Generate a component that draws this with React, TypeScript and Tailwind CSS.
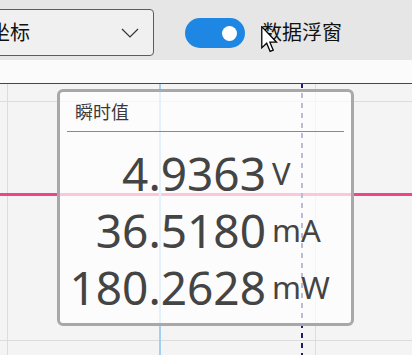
import React from "react";

const readings = [
  { value: "4.9363", unit: "V" },
  { value: "36.5180", unit: "mA" },
  { value: "180.2628", unit: "mW" },
];

const cjk = "font-['Noto_Sans','Noto_Sans_CJK_SC',sans-serif]";

function Cursor() {
  return (
    <svg
      className="absolute left-[261px] top-[26px]"
      width="17"
      height="27"
      viewBox="0 0 13 21"
      aria-hidden="true"
    >
      <path
        d="M0.5 0.5 L0.5 17 L4.3 13.4 L7 19.8 L9.4 18.8 L6.8 12.6 L12 12.6 Z"
        fill="#fff"
        stroke="#000"
        strokeWidth="1"
        strokeLinejoin="miter"
      />
    </svg>
  );
}

function Toolbar() {
  return (
    <div className="relative flex h-[60px] items-start bg-[#e6e6e6] pt-[9px]">
      <div className="ml-[-60px] flex h-[47px] w-[214px] items-center justify-between rounded-[4px] border-[1.5px] border-[#5c5c5c] bg-[#f0f0f0] pl-[49px] pr-[14px]">
        <span className={`${cjk} text-[20px] leading-none text-[#111]`}>坐标</span>
        <svg width="18" height="10" viewBox="0 0 18 10" aria-hidden="true">
          <path d="M1 1 L9 9 L17 1" fill="none" stroke="#333" strokeWidth="1.2" />
        </svg>
      </div>
      <div className="ml-[31px] mt-[9px] flex h-[30px] w-[60px] items-center justify-end rounded-full bg-[#1e87e3] pr-[8px]">
        <div className="h-[15px] w-[15px] rounded-full bg-white" />
      </div>
      <span className={`${cjk} ml-[17px] mt-[12px] text-[20px] leading-[24px] text-[#111]`}>数据浮窗</span>
      <Cursor />
    </div>
  );
}

function Popup() {
  return (
    <div className="absolute left-[57px] top-[5px] h-[237px] w-[297px] rounded-[6px] border-[3px] border-[#a8a8a8] bg-white/70">
      <div className="mx-[7px] mt-[8px] border-b-[1.5px] border-[#8a8a8a] pb-[7px] pl-[8px]">
        <span className={`${cjk} block text-[18px] leading-[24px] text-[#3a3a3a]`}>瞬时值</span>
      </div>
      <div className="mt-[13px] flex flex-col font-['Noto_Sans',sans-serif] text-[#444]">
        {readings.map((r) => (
          <div key={r.unit} className="flex items-start">
            <span className="w-[206px] text-right text-[46px] leading-[57px]">{r.value}</span>
            <span className="ml-[6px] text-[31px] leading-[57px]">{r.unit}</span>
          </div>
        ))}
      </div>
    </div>
  );
}

function Chart() {
  return (
    <div className="relative h-[271px] overflow-hidden bg-[#f4f4f4]">
      {/* grid */}
      <div className="absolute left-[7px] top-0 h-full w-px bg-[#dcdcdc]" />
      <div className="absolute left-[315px] top-0 h-full w-px bg-[#dcdcdc]" />
      <div className="absolute left-0 top-[17px] h-px w-full bg-[#dcdcdc]" />
      <div className="absolute left-0 top-[256px] h-px w-full bg-[#dcdcdc]" />
      {/* signal */}
      <div className="absolute left-0 top-[109px] h-[2.5px] w-full bg-[#ee4489]" />
      {/* cursor lines */}
      <div className="absolute left-[159px] top-0 h-full w-[2px] bg-[#a3cff0]" />
      <svg className="absolute left-[301px] top-0" width="2" height="271" aria-hidden="true">
        <line x1="1" y1="-1" x2="1" y2="271" stroke="#1d1b6e" strokeWidth="2" strokeDasharray="5 5" />
      </svg>
      <Popup />
    </div>
  );
}

export default function App() {
  return (
    <div className="h-[355px] w-[412px] overflow-hidden bg-[#f4f4f4]">
      <Toolbar />
      <div className="h-[23px] bg-[#fbfbfb]" />
      <div className="h-px bg-[#1f5660]" />
      <Chart />
    </div>
  );
}
